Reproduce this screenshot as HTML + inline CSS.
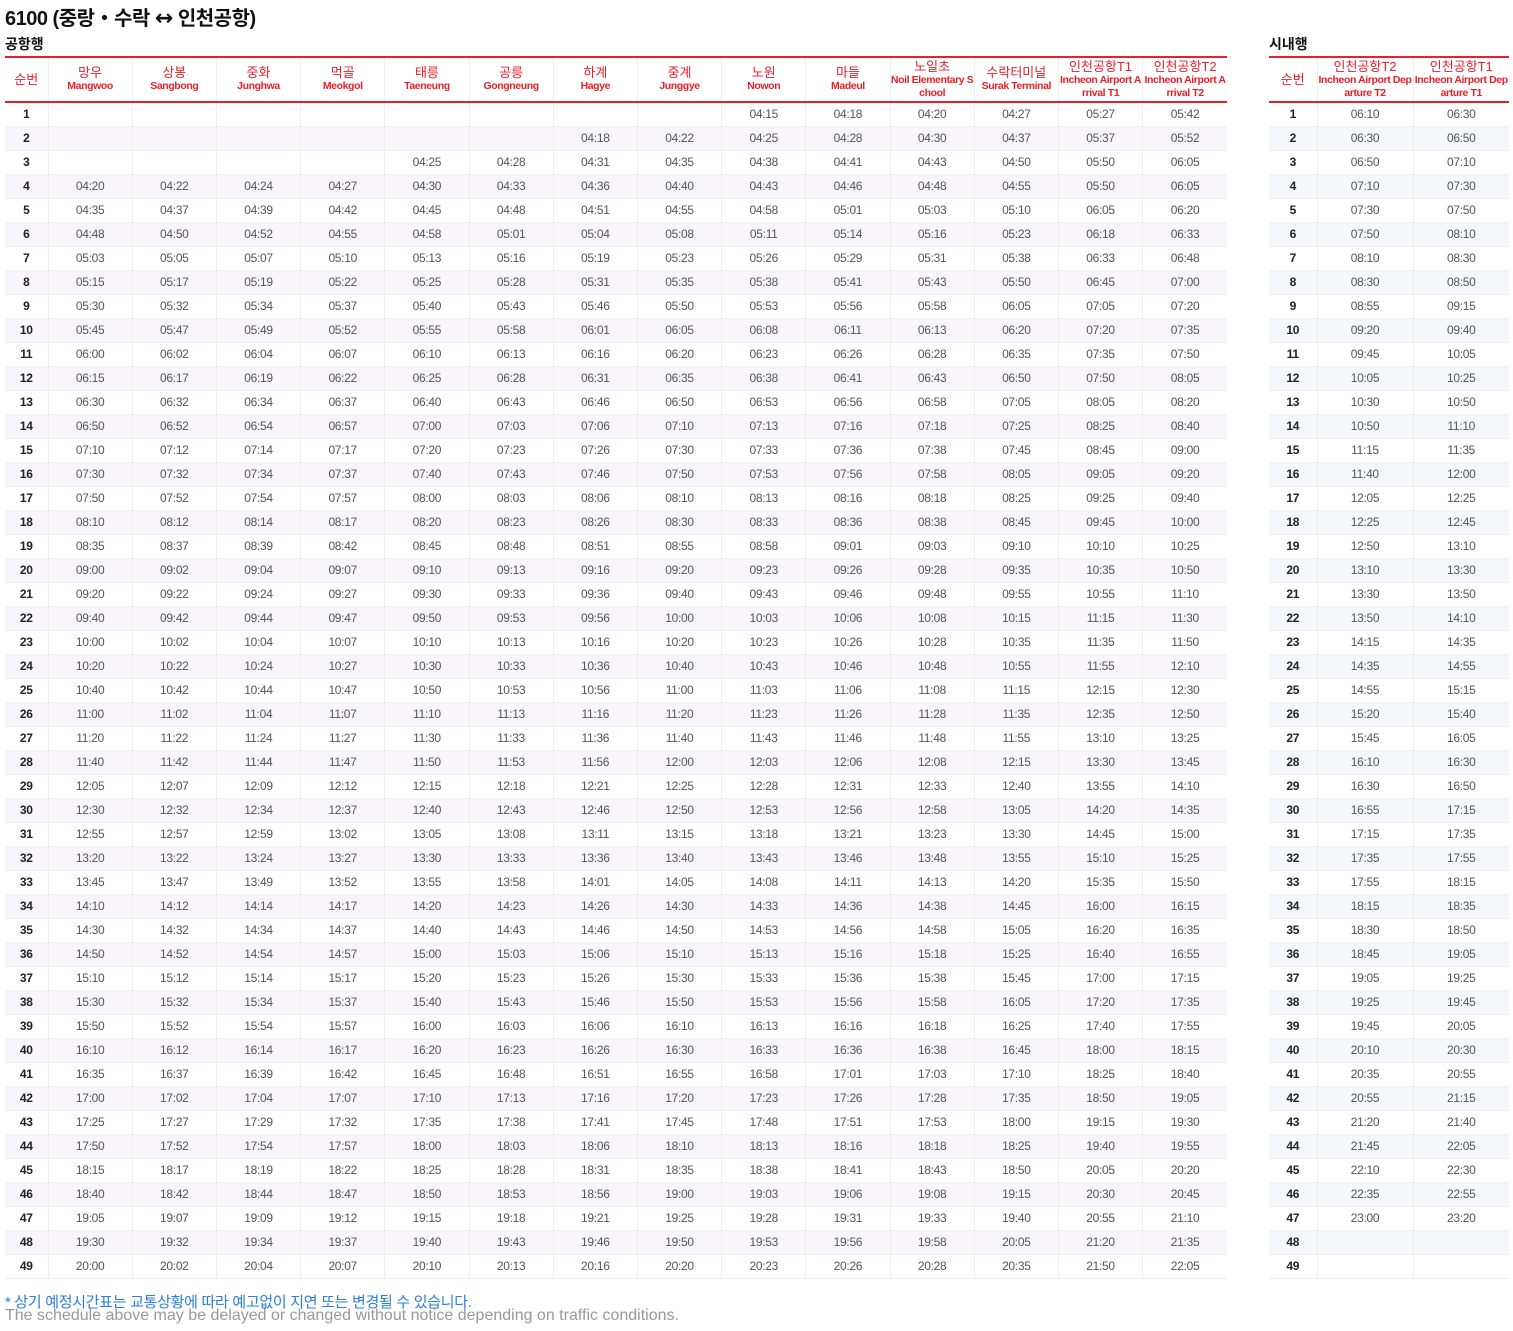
<!DOCTYPE html>
<html><head><meta charset="utf-8">
<style>
*{margin:0;padding:0;box-sizing:border-box}
body{width:1513px;height:1331px;background:#fff;font-family:"Liberation Sans","Noto Sans CJK KR",sans-serif;position:relative;overflow:hidden}
h1{position:absolute;left:5px;top:2px;font-size:20px;font-weight:bold;color:#111;letter-spacing:-0.5px}
h1 .ar{font-size:22px;font-family:"DejaVu Sans",sans-serif;font-weight:bold}
.lbl{position:absolute;top:34px;font-size:14px;font-weight:bold;color:#111}
table{position:absolute;top:56px;border-collapse:collapse;table-layout:fixed}
th{height:45px;border-top:2px solid #e8202a;border-bottom:2px solid #e8202a;border-left:1px solid #f0f0f0;color:#e8202a;font-weight:normal;font-size:13px;line-height:14px;vertical-align:middle;text-align:center;padding:0}
th:first-child{border-left:none}
th small{display:block;font-size:10.5px;font-weight:bold;line-height:13px;letter-spacing:-0.4px;word-break:break-all}
td{height:24px;border-bottom:1px solid #eee;border-left:1px solid #eee;text-align:center;font-size:12px;color:#555;padding:0;letter-spacing:-0.3px}
td:first-child{border-left:none;font-weight:bold;color:#222}
#L{left:5px;width:1222px}
#L tr:nth-child(even) td{background:#f9f5fd}
#R{left:1269px;width:240px}
#R tr:nth-child(even) td{background:#f4f8fd}
.f1{position:absolute;left:5px;top:1291px;font-size:15px;color:#2a7de1;letter-spacing:-0.3px}
.f2{position:absolute;left:5px;top:1307px;font-size:16px;color:#999;letter-spacing:0}
</style></head><body>
<h1>6100 (중랑・수락 <span class="ar">↔</span> 인천공항)</h1>
<div class="lbl" style="left:5px">공항행</div>
<div class="lbl" style="left:1269px">시내행</div>
<table id="L">
<colgroup><col style="width:43px"><col span="14" style="width:84.2px"></colgroup>
<thead><tr><th>순번</th><th>망우<small>Mangwoo</small></th><th>상봉<small>Sangbong</small></th><th>중화<small>Junghwa</small></th><th>먹골<small>Meokgol</small></th><th>태릉<small>Taeneung</small></th><th>공릉<small>Gongneung</small></th><th>하계<small>Hagye</small></th><th>중계<small>Junggye</small></th><th>노원<small>Nowon</small></th><th>마들<small>Madeul</small></th><th>노일초<small>Noil Elementary School</small></th><th>수락터미널<small>Surak Terminal</small></th><th>인천공항T1<small>Incheon Airport Arrival T1</small></th><th>인천공항T2<small>Incheon Airport Arrival T2</small></th></tr></thead>
<tbody>
<tr><td>1</td><td></td><td></td><td></td><td></td><td></td><td></td><td></td><td></td><td>04:15</td><td>04:18</td><td>04:20</td><td>04:27</td><td>05:27</td><td>05:42</td></tr>
<tr><td>2</td><td></td><td></td><td></td><td></td><td></td><td></td><td>04:18</td><td>04:22</td><td>04:25</td><td>04:28</td><td>04:30</td><td>04:37</td><td>05:37</td><td>05:52</td></tr>
<tr><td>3</td><td></td><td></td><td></td><td></td><td>04:25</td><td>04:28</td><td>04:31</td><td>04:35</td><td>04:38</td><td>04:41</td><td>04:43</td><td>04:50</td><td>05:50</td><td>06:05</td></tr>
<tr><td>4</td><td>04:20</td><td>04:22</td><td>04:24</td><td>04:27</td><td>04:30</td><td>04:33</td><td>04:36</td><td>04:40</td><td>04:43</td><td>04:46</td><td>04:48</td><td>04:55</td><td>05:50</td><td>06:05</td></tr>
<tr><td>5</td><td>04:35</td><td>04:37</td><td>04:39</td><td>04:42</td><td>04:45</td><td>04:48</td><td>04:51</td><td>04:55</td><td>04:58</td><td>05:01</td><td>05:03</td><td>05:10</td><td>06:05</td><td>06:20</td></tr>
<tr><td>6</td><td>04:48</td><td>04:50</td><td>04:52</td><td>04:55</td><td>04:58</td><td>05:01</td><td>05:04</td><td>05:08</td><td>05:11</td><td>05:14</td><td>05:16</td><td>05:23</td><td>06:18</td><td>06:33</td></tr>
<tr><td>7</td><td>05:03</td><td>05:05</td><td>05:07</td><td>05:10</td><td>05:13</td><td>05:16</td><td>05:19</td><td>05:23</td><td>05:26</td><td>05:29</td><td>05:31</td><td>05:38</td><td>06:33</td><td>06:48</td></tr>
<tr><td>8</td><td>05:15</td><td>05:17</td><td>05:19</td><td>05:22</td><td>05:25</td><td>05:28</td><td>05:31</td><td>05:35</td><td>05:38</td><td>05:41</td><td>05:43</td><td>05:50</td><td>06:45</td><td>07:00</td></tr>
<tr><td>9</td><td>05:30</td><td>05:32</td><td>05:34</td><td>05:37</td><td>05:40</td><td>05:43</td><td>05:46</td><td>05:50</td><td>05:53</td><td>05:56</td><td>05:58</td><td>06:05</td><td>07:05</td><td>07:20</td></tr>
<tr><td>10</td><td>05:45</td><td>05:47</td><td>05:49</td><td>05:52</td><td>05:55</td><td>05:58</td><td>06:01</td><td>06:05</td><td>06:08</td><td>06:11</td><td>06:13</td><td>06:20</td><td>07:20</td><td>07:35</td></tr>
<tr><td>11</td><td>06:00</td><td>06:02</td><td>06:04</td><td>06:07</td><td>06:10</td><td>06:13</td><td>06:16</td><td>06:20</td><td>06:23</td><td>06:26</td><td>06:28</td><td>06:35</td><td>07:35</td><td>07:50</td></tr>
<tr><td>12</td><td>06:15</td><td>06:17</td><td>06:19</td><td>06:22</td><td>06:25</td><td>06:28</td><td>06:31</td><td>06:35</td><td>06:38</td><td>06:41</td><td>06:43</td><td>06:50</td><td>07:50</td><td>08:05</td></tr>
<tr><td>13</td><td>06:30</td><td>06:32</td><td>06:34</td><td>06:37</td><td>06:40</td><td>06:43</td><td>06:46</td><td>06:50</td><td>06:53</td><td>06:56</td><td>06:58</td><td>07:05</td><td>08:05</td><td>08:20</td></tr>
<tr><td>14</td><td>06:50</td><td>06:52</td><td>06:54</td><td>06:57</td><td>07:00</td><td>07:03</td><td>07:06</td><td>07:10</td><td>07:13</td><td>07:16</td><td>07:18</td><td>07:25</td><td>08:25</td><td>08:40</td></tr>
<tr><td>15</td><td>07:10</td><td>07:12</td><td>07:14</td><td>07:17</td><td>07:20</td><td>07:23</td><td>07:26</td><td>07:30</td><td>07:33</td><td>07:36</td><td>07:38</td><td>07:45</td><td>08:45</td><td>09:00</td></tr>
<tr><td>16</td><td>07:30</td><td>07:32</td><td>07:34</td><td>07:37</td><td>07:40</td><td>07:43</td><td>07:46</td><td>07:50</td><td>07:53</td><td>07:56</td><td>07:58</td><td>08:05</td><td>09:05</td><td>09:20</td></tr>
<tr><td>17</td><td>07:50</td><td>07:52</td><td>07:54</td><td>07:57</td><td>08:00</td><td>08:03</td><td>08:06</td><td>08:10</td><td>08:13</td><td>08:16</td><td>08:18</td><td>08:25</td><td>09:25</td><td>09:40</td></tr>
<tr><td>18</td><td>08:10</td><td>08:12</td><td>08:14</td><td>08:17</td><td>08:20</td><td>08:23</td><td>08:26</td><td>08:30</td><td>08:33</td><td>08:36</td><td>08:38</td><td>08:45</td><td>09:45</td><td>10:00</td></tr>
<tr><td>19</td><td>08:35</td><td>08:37</td><td>08:39</td><td>08:42</td><td>08:45</td><td>08:48</td><td>08:51</td><td>08:55</td><td>08:58</td><td>09:01</td><td>09:03</td><td>09:10</td><td>10:10</td><td>10:25</td></tr>
<tr><td>20</td><td>09:00</td><td>09:02</td><td>09:04</td><td>09:07</td><td>09:10</td><td>09:13</td><td>09:16</td><td>09:20</td><td>09:23</td><td>09:26</td><td>09:28</td><td>09:35</td><td>10:35</td><td>10:50</td></tr>
<tr><td>21</td><td>09:20</td><td>09:22</td><td>09:24</td><td>09:27</td><td>09:30</td><td>09:33</td><td>09:36</td><td>09:40</td><td>09:43</td><td>09:46</td><td>09:48</td><td>09:55</td><td>10:55</td><td>11:10</td></tr>
<tr><td>22</td><td>09:40</td><td>09:42</td><td>09:44</td><td>09:47</td><td>09:50</td><td>09:53</td><td>09:56</td><td>10:00</td><td>10:03</td><td>10:06</td><td>10:08</td><td>10:15</td><td>11:15</td><td>11:30</td></tr>
<tr><td>23</td><td>10:00</td><td>10:02</td><td>10:04</td><td>10:07</td><td>10:10</td><td>10:13</td><td>10:16</td><td>10:20</td><td>10:23</td><td>10:26</td><td>10:28</td><td>10:35</td><td>11:35</td><td>11:50</td></tr>
<tr><td>24</td><td>10:20</td><td>10:22</td><td>10:24</td><td>10:27</td><td>10:30</td><td>10:33</td><td>10:36</td><td>10:40</td><td>10:43</td><td>10:46</td><td>10:48</td><td>10:55</td><td>11:55</td><td>12:10</td></tr>
<tr><td>25</td><td>10:40</td><td>10:42</td><td>10:44</td><td>10:47</td><td>10:50</td><td>10:53</td><td>10:56</td><td>11:00</td><td>11:03</td><td>11:06</td><td>11:08</td><td>11:15</td><td>12:15</td><td>12:30</td></tr>
<tr><td>26</td><td>11:00</td><td>11:02</td><td>11:04</td><td>11:07</td><td>11:10</td><td>11:13</td><td>11:16</td><td>11:20</td><td>11:23</td><td>11:26</td><td>11:28</td><td>11:35</td><td>12:35</td><td>12:50</td></tr>
<tr><td>27</td><td>11:20</td><td>11:22</td><td>11:24</td><td>11:27</td><td>11:30</td><td>11:33</td><td>11:36</td><td>11:40</td><td>11:43</td><td>11:46</td><td>11:48</td><td>11:55</td><td>13:10</td><td>13:25</td></tr>
<tr><td>28</td><td>11:40</td><td>11:42</td><td>11:44</td><td>11:47</td><td>11:50</td><td>11:53</td><td>11:56</td><td>12:00</td><td>12:03</td><td>12:06</td><td>12:08</td><td>12:15</td><td>13:30</td><td>13:45</td></tr>
<tr><td>29</td><td>12:05</td><td>12:07</td><td>12:09</td><td>12:12</td><td>12:15</td><td>12:18</td><td>12:21</td><td>12:25</td><td>12:28</td><td>12:31</td><td>12:33</td><td>12:40</td><td>13:55</td><td>14:10</td></tr>
<tr><td>30</td><td>12:30</td><td>12:32</td><td>12:34</td><td>12:37</td><td>12:40</td><td>12:43</td><td>12:46</td><td>12:50</td><td>12:53</td><td>12:56</td><td>12:58</td><td>13:05</td><td>14:20</td><td>14:35</td></tr>
<tr><td>31</td><td>12:55</td><td>12:57</td><td>12:59</td><td>13:02</td><td>13:05</td><td>13:08</td><td>13:11</td><td>13:15</td><td>13:18</td><td>13:21</td><td>13:23</td><td>13:30</td><td>14:45</td><td>15:00</td></tr>
<tr><td>32</td><td>13:20</td><td>13:22</td><td>13:24</td><td>13:27</td><td>13:30</td><td>13:33</td><td>13:36</td><td>13:40</td><td>13:43</td><td>13:46</td><td>13:48</td><td>13:55</td><td>15:10</td><td>15:25</td></tr>
<tr><td>33</td><td>13:45</td><td>13:47</td><td>13:49</td><td>13:52</td><td>13:55</td><td>13:58</td><td>14:01</td><td>14:05</td><td>14:08</td><td>14:11</td><td>14:13</td><td>14:20</td><td>15:35</td><td>15:50</td></tr>
<tr><td>34</td><td>14:10</td><td>14:12</td><td>14:14</td><td>14:17</td><td>14:20</td><td>14:23</td><td>14:26</td><td>14:30</td><td>14:33</td><td>14:36</td><td>14:38</td><td>14:45</td><td>16:00</td><td>16:15</td></tr>
<tr><td>35</td><td>14:30</td><td>14:32</td><td>14:34</td><td>14:37</td><td>14:40</td><td>14:43</td><td>14:46</td><td>14:50</td><td>14:53</td><td>14:56</td><td>14:58</td><td>15:05</td><td>16:20</td><td>16:35</td></tr>
<tr><td>36</td><td>14:50</td><td>14:52</td><td>14:54</td><td>14:57</td><td>15:00</td><td>15:03</td><td>15:06</td><td>15:10</td><td>15:13</td><td>15:16</td><td>15:18</td><td>15:25</td><td>16:40</td><td>16:55</td></tr>
<tr><td>37</td><td>15:10</td><td>15:12</td><td>15:14</td><td>15:17</td><td>15:20</td><td>15:23</td><td>15:26</td><td>15:30</td><td>15:33</td><td>15:36</td><td>15:38</td><td>15:45</td><td>17:00</td><td>17:15</td></tr>
<tr><td>38</td><td>15:30</td><td>15:32</td><td>15:34</td><td>15:37</td><td>15:40</td><td>15:43</td><td>15:46</td><td>15:50</td><td>15:53</td><td>15:56</td><td>15:58</td><td>16:05</td><td>17:20</td><td>17:35</td></tr>
<tr><td>39</td><td>15:50</td><td>15:52</td><td>15:54</td><td>15:57</td><td>16:00</td><td>16:03</td><td>16:06</td><td>16:10</td><td>16:13</td><td>16:16</td><td>16:18</td><td>16:25</td><td>17:40</td><td>17:55</td></tr>
<tr><td>40</td><td>16:10</td><td>16:12</td><td>16:14</td><td>16:17</td><td>16:20</td><td>16:23</td><td>16:26</td><td>16:30</td><td>16:33</td><td>16:36</td><td>16:38</td><td>16:45</td><td>18:00</td><td>18:15</td></tr>
<tr><td>41</td><td>16:35</td><td>16:37</td><td>16:39</td><td>16:42</td><td>16:45</td><td>16:48</td><td>16:51</td><td>16:55</td><td>16:58</td><td>17:01</td><td>17:03</td><td>17:10</td><td>18:25</td><td>18:40</td></tr>
<tr><td>42</td><td>17:00</td><td>17:02</td><td>17:04</td><td>17:07</td><td>17:10</td><td>17:13</td><td>17:16</td><td>17:20</td><td>17:23</td><td>17:26</td><td>17:28</td><td>17:35</td><td>18:50</td><td>19:05</td></tr>
<tr><td>43</td><td>17:25</td><td>17:27</td><td>17:29</td><td>17:32</td><td>17:35</td><td>17:38</td><td>17:41</td><td>17:45</td><td>17:48</td><td>17:51</td><td>17:53</td><td>18:00</td><td>19:15</td><td>19:30</td></tr>
<tr><td>44</td><td>17:50</td><td>17:52</td><td>17:54</td><td>17:57</td><td>18:00</td><td>18:03</td><td>18:06</td><td>18:10</td><td>18:13</td><td>18:16</td><td>18:18</td><td>18:25</td><td>19:40</td><td>19:55</td></tr>
<tr><td>45</td><td>18:15</td><td>18:17</td><td>18:19</td><td>18:22</td><td>18:25</td><td>18:28</td><td>18:31</td><td>18:35</td><td>18:38</td><td>18:41</td><td>18:43</td><td>18:50</td><td>20:05</td><td>20:20</td></tr>
<tr><td>46</td><td>18:40</td><td>18:42</td><td>18:44</td><td>18:47</td><td>18:50</td><td>18:53</td><td>18:56</td><td>19:00</td><td>19:03</td><td>19:06</td><td>19:08</td><td>19:15</td><td>20:30</td><td>20:45</td></tr>
<tr><td>47</td><td>19:05</td><td>19:07</td><td>19:09</td><td>19:12</td><td>19:15</td><td>19:18</td><td>19:21</td><td>19:25</td><td>19:28</td><td>19:31</td><td>19:33</td><td>19:40</td><td>20:55</td><td>21:10</td></tr>
<tr><td>48</td><td>19:30</td><td>19:32</td><td>19:34</td><td>19:37</td><td>19:40</td><td>19:43</td><td>19:46</td><td>19:50</td><td>19:53</td><td>19:56</td><td>19:58</td><td>20:05</td><td>21:20</td><td>21:35</td></tr>
<tr><td>49</td><td>20:00</td><td>20:02</td><td>20:04</td><td>20:07</td><td>20:10</td><td>20:13</td><td>20:16</td><td>20:20</td><td>20:23</td><td>20:26</td><td>20:28</td><td>20:35</td><td>21:50</td><td>22:05</td></tr>
</tbody></table>
<table id="R">
<colgroup><col style="width:48px"><col style="width:96px"><col style="width:96px"></colgroup>
<thead><tr><th>순번</th><th>인천공항T2<small>Incheon Airport Departure T2</small></th><th>인천공항T1<small>Incheon Airport Departure T1</small></th></tr></thead>
<tbody>
<tr><td>1</td><td>06:10</td><td>06:30</td></tr>
<tr><td>2</td><td>06:30</td><td>06:50</td></tr>
<tr><td>3</td><td>06:50</td><td>07:10</td></tr>
<tr><td>4</td><td>07:10</td><td>07:30</td></tr>
<tr><td>5</td><td>07:30</td><td>07:50</td></tr>
<tr><td>6</td><td>07:50</td><td>08:10</td></tr>
<tr><td>7</td><td>08:10</td><td>08:30</td></tr>
<tr><td>8</td><td>08:30</td><td>08:50</td></tr>
<tr><td>9</td><td>08:55</td><td>09:15</td></tr>
<tr><td>10</td><td>09:20</td><td>09:40</td></tr>
<tr><td>11</td><td>09:45</td><td>10:05</td></tr>
<tr><td>12</td><td>10:05</td><td>10:25</td></tr>
<tr><td>13</td><td>10:30</td><td>10:50</td></tr>
<tr><td>14</td><td>10:50</td><td>11:10</td></tr>
<tr><td>15</td><td>11:15</td><td>11:35</td></tr>
<tr><td>16</td><td>11:40</td><td>12:00</td></tr>
<tr><td>17</td><td>12:05</td><td>12:25</td></tr>
<tr><td>18</td><td>12:25</td><td>12:45</td></tr>
<tr><td>19</td><td>12:50</td><td>13:10</td></tr>
<tr><td>20</td><td>13:10</td><td>13:30</td></tr>
<tr><td>21</td><td>13:30</td><td>13:50</td></tr>
<tr><td>22</td><td>13:50</td><td>14:10</td></tr>
<tr><td>23</td><td>14:15</td><td>14:35</td></tr>
<tr><td>24</td><td>14:35</td><td>14:55</td></tr>
<tr><td>25</td><td>14:55</td><td>15:15</td></tr>
<tr><td>26</td><td>15:20</td><td>15:40</td></tr>
<tr><td>27</td><td>15:45</td><td>16:05</td></tr>
<tr><td>28</td><td>16:10</td><td>16:30</td></tr>
<tr><td>29</td><td>16:30</td><td>16:50</td></tr>
<tr><td>30</td><td>16:55</td><td>17:15</td></tr>
<tr><td>31</td><td>17:15</td><td>17:35</td></tr>
<tr><td>32</td><td>17:35</td><td>17:55</td></tr>
<tr><td>33</td><td>17:55</td><td>18:15</td></tr>
<tr><td>34</td><td>18:15</td><td>18:35</td></tr>
<tr><td>35</td><td>18:30</td><td>18:50</td></tr>
<tr><td>36</td><td>18:45</td><td>19:05</td></tr>
<tr><td>37</td><td>19:05</td><td>19:25</td></tr>
<tr><td>38</td><td>19:25</td><td>19:45</td></tr>
<tr><td>39</td><td>19:45</td><td>20:05</td></tr>
<tr><td>40</td><td>20:10</td><td>20:30</td></tr>
<tr><td>41</td><td>20:35</td><td>20:55</td></tr>
<tr><td>42</td><td>20:55</td><td>21:15</td></tr>
<tr><td>43</td><td>21:20</td><td>21:40</td></tr>
<tr><td>44</td><td>21:45</td><td>22:05</td></tr>
<tr><td>45</td><td>22:10</td><td>22:30</td></tr>
<tr><td>46</td><td>22:35</td><td>22:55</td></tr>
<tr><td>47</td><td>23:00</td><td>23:20</td></tr>
<tr><td>48</td><td></td><td></td></tr>
<tr><td>49</td><td></td><td></td></tr>
</tbody></table>
<div class="f1">* 상기 예정시간표는 교통상황에 따라 예고없이 지연 또는 변경될 수 있습니다.</div>
<div class="f2">The schedule above may be delayed or changed without notice depending on traffic conditions.</div>
</body></html>
